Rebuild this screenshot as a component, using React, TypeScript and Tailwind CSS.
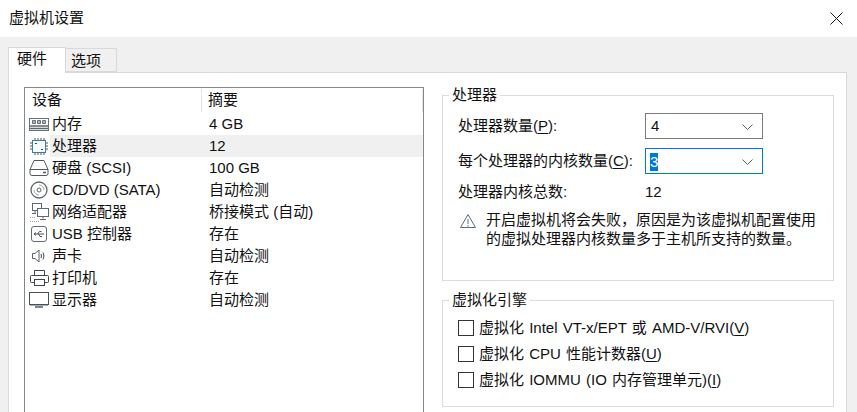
import { ReactNode } from 'react';

const font = '[font-family:"Liberation_Sans","Noto_Sans_CJK_SC",sans-serif]';

function MemoryIcon() {
  return (
    <svg width="20" height="13" viewBox="0 0 20 13" fill="none" stroke="#66717a">
      <rect x="0.500" y="0.500" width="19" height="12" fill="#fff" strokeWidth="1" />
      <path d="M3.500 2.500h3v3h-3zM8.500 2.500h3v3h-3zM13.500 2.500h3v3h-3z" fill="#aeb6bc" />
      <path d="M1 8h18M1 10.500h18" strokeWidth="1.500" stroke="#5b666f" />
    </svg>
  );
}

function CpuIcon() {
  return (
    <svg width="18" height="17" viewBox="0 0 18 17" fill="none">
      <rect x="2.500" y="2.500" width="13" height="12" fill="#f7fbfe" stroke="#3a7cb0" />
      <path
        d="M5 0v2M8 0v2M11 0v2M14 0v2M5 15v2M8 15v2M11 15v2M14 15v2M0 5h2M0 8h2M0 11h2M16 5h2M16 8h2M16 11h2"
        stroke="#4a5560"
      />
      <path d="M5 5h2v1h-2zM11 11h2v1h-2z" fill="#2b4a63" />
    </svg>
  );
}

function DiskIcon() {
  return (
    <svg width="20" height="16" viewBox="0 0 20 16" fill="none" stroke="#50565c">
      <path d="M5 0.500h10l4 9v4a2 2 0 0 1-2 2h-14a2 2 0 0 1-2-2v-4z" />
      <path d="M1 9.500h18" />
      <path d="M14 12.500h3" strokeWidth="1.500" />
    </svg>
  );
}

function CdIcon() {
  return (
    <svg width="18" height="18" viewBox="0 0 18 18" fill="none" stroke="#5f666d">
      <circle cx="9" cy="9" r="8" strokeWidth="1.300" />
      <circle cx="9" cy="9" r="2" />
      <path d="M9 4a5 5 0 0 1 5 5" stroke="#a4abb1" />
      <path d="M9 14a5 5 0 0 1-5-5" stroke="#a4abb1" />
    </svg>
  );
}

function NetIcon() {
  return (
    <svg width="19" height="19" viewBox="0 0 19 19" fill="none" stroke="#5d6871">
      <rect x="2.500" y="0.500" width="9" height="7" fill="#fff" />
      <rect x="7.500" y="5.500" width="11" height="8" fill="#fff" />
      <path d="M13 13.500v2M10 16.500h6M5 8v3M2 10.500h4" />
      <path d="M0 14.500h6M0 18.500h10" strokeDasharray="1 1" stroke="#9aa1a8" />
    </svg>
  );
}

function UsbIcon() {
  return (
    <svg width="16" height="16" viewBox="0 0 16 16" fill="none" stroke="#626a71">
      <rect x="0.500" y="0.500" width="15" height="15" rx="2.500" />
      <path d="M3 8h10M3 8l2 1.500M3 8l2-1.500M6.500 8l2-2.500h2M7.500 8l1.500 2.500h2" stroke="#4b5259" />
    </svg>
  );
}

function SpeakerIcon() {
  return (
    <svg width="14" height="14" viewBox="0 0 14 14" fill="none" stroke="#5a6168">
      <path d="M0.500 4.500h2.500l4-3.500v12l-4-3.500h-2.500z" />
      <path d="M9 5q1 2 0 4M11 3.500q2 3.500 0 7" stroke="#3e444a" />
    </svg>
  );
}

function PrinterIcon() {
  return (
    <svg width="19" height="16" viewBox="0 0 19 16" fill="none" stroke="#3f454b">
      <path d="M4.500 5v-4.500h10v4.500M4.500 12.500h-3a1 1 0 0 1-1-1v-5a1 1 0 0 1 1-1h16a1 1 0 0 1 1 1v5a1 1 0 0 1-1 1h-3" />
      <rect x="4.500" y="9.500" width="10" height="6" />
    </svg>
  );
}

function MonitorIcon() {
  return (
    <svg width="20" height="16" viewBox="0 0 20 16" fill="none" stroke="#4a5056">
      <rect x="0.500" y="0.500" width="19" height="12" />
      <path d="M1 13.500h18" stroke="#a4abb1" />
      <path d="M6 15h8" strokeWidth="2" stroke="#7c858d" />
    </svg>
  );
}

function Chevron() {
  return (
    <svg width="11" height="6" viewBox="0 0 11 6" fill="none" stroke="#606060" className="absolute right-[9px] top-[10px]">
      <path d="M0.500 0.500l5 5 5-5" />
    </svg>
  );
}

const devices: { icon: ReactNode; name: string; summary: string; selected?: boolean }[] = [
  { icon: <MemoryIcon />, name: '内存', summary: '4 GB' },
  { icon: <CpuIcon />, name: '处理器', summary: '12', selected: true },
  { icon: <DiskIcon />, name: '硬盘 (SCSI)', summary: '100 GB' },
  { icon: <CdIcon />, name: 'CD/DVD (SATA)', summary: '自动检测' },
  { icon: <NetIcon />, name: '网络适配器', summary: '桥接模式 (自动)' },
  { icon: <UsbIcon />, name: 'USB 控制器', summary: '存在' },
  { icon: <SpeakerIcon />, name: '声卡', summary: '自动检测' },
  { icon: <PrinterIcon />, name: '打印机', summary: '存在' },
  { icon: <MonitorIcon />, name: '显示器', summary: '自动检测' },
];

function GroupBox({ title, className, children }: { title: string; className: string; children: ReactNode }) {
  return (
    <div className={`relative border border-[#dcdcdc] ${className}`}>
      <span className="absolute left-[6px] top-[-11px] bg-white px-[3px] leading-[20px]">{title}</span>
      {children}
    </div>
  );
}

function Check({ label, hotkey }: { label: string; hotkey: string }) {
  return (
    <div className="flex h-[26px] items-center gap-[5px]">
      <div className="size-[16px] border border-[#333]" />
      <span className="[word-spacing:1px]">
        {label}
        <span className="underline underline-offset-2">{hotkey}</span>)
      </span>
    </div>
  );
}

export default function App() {
  return (
    <div className={`h-[412px] w-[857px] overflow-hidden bg-[#f0f0f0] text-[15px] text-[#111] ${font}`}>
      <div className="flex h-[37px] items-center justify-between bg-white pl-[9px] pr-[14px]">
        <span>虚拟机设置</span>
        <svg width="13" height="13" viewBox="0 0 13 13" stroke="#111" fill="none">
          <path d="M0.500 0.500l12 12M12.500 0.500l-12 12" />
        </svg>
      </div>

      <div className="flex h-[35px] items-end pl-[8px]">
        <div className="relative z-10 mb-[-1px] h-[26px] w-[58px] border border-b-0 border-[#d9d9d9] bg-white pl-[8px] leading-[22px]">
          硬件
        </div>
        <div className="h-[24px] w-[51px] border border-l-0 border-[#d9d9d9] bg-[#f0f0f0] pl-[5px] pt-[1px] leading-[22px]">
          选项
        </div>
      </div>

      <div className="ml-[8px] flex h-[400px] w-[839px] items-start gap-[18px] border border-[#d9d9d9] bg-white pl-[15px] pt-[14px]">
        <div className="h-[340px] w-[400px] shrink-0 border border-[#828790] pt-[1px]">
          <div className="flex h-[24px]">
            <div className="h-[23px] w-[177px] border-r border-[#e5e5e5] pl-[7px] leading-[22px]">设备</div>
            <div className="h-[23px] flex-1 border-r border-[#e5e5e5] pl-[6px] leading-[22px]">摘要</div>
          </div>
          {devices.map((d) => (
            <div key={d.name} className="flex h-[22px] items-center">
              <div className="flex w-[25px] shrink-0 justify-center pl-[3px]">{d.icon}</div>
              <div className={`flex h-full flex-1 items-center ${d.selected ? 'bg-[#f0f0f0]' : ''}`}>
                <span className="w-[155px] shrink-0 pl-[2px]">{d.name}</span>
                <span className="pl-[4px]">{d.summary}</span>
              </div>
            </div>
          ))}
        </div>

        <div className="flex w-[392px] flex-col pt-[8px]">
          <GroupBox title="处理器" className="h-[186px] px-[15px] pt-[17px]">
            <div className="flex h-[26px] items-center">
              <span className="w-[187px]">
                处理器数量(<span className="underline underline-offset-2">P</span>):
              </span>
              <div className="relative h-[26px] w-[118px] border border-[#7a7a7a] pl-[5px] leading-[24px]">
                4
                <Chevron />
              </div>
            </div>
            <div className="mt-[9px] flex h-[26px] items-center">
              <span className="w-[187px]">
                每个处理器的内核数量(<span className="underline underline-offset-2">C</span>):
              </span>
              <div className="relative h-[26px] w-[118px] border border-[#0078d7] pl-[4px] leading-[24px]">
                <span className="inline-block h-[18px] bg-[#0078d7] align-middle leading-[18px] text-white">3</span>
                <Chevron />
              </div>
            </div>
            <div className="mt-[5px] flex h-[26px] items-center">
              <span className="w-[187px]">处理器内核总数:</span>
              <span>12</span>
            </div>
            <div className="mt-[5px] flex items-start">
              <svg width="18" height="16" viewBox="0 0 18 16" fill="none" stroke="#5b6b7b" className="mt-[3px] ml-[1px] shrink-0">
                <path d="M9 1.500l7.500 13h-15z" />
                <path d="M9 6v5M9 12v1.500" />
              </svg>
              <p className="ml-[9px] w-[340px] leading-[19px]">
                开启虚拟机将会失败，原因是为该虚拟机配置使用的虚拟处理器内核数量多于主机所支持的数量。
              </p>
            </div>
          </GroupBox>

          <GroupBox title="虚拟化引擎" className="mt-[19px] h-[107px] px-[15px] pt-[14px]">
            <Check label="虚拟化 Intel VT-x/EPT 或 AMD-V/RVI(" hotkey="V" />
            <Check label="虚拟化 CPU 性能计数器(" hotkey="U" />
            <Check label="虚拟化 IOMMU (IO 内存管理单元)(" hotkey="I" />
          </GroupBox>
        </div>
      </div>
    </div>
  );
}
